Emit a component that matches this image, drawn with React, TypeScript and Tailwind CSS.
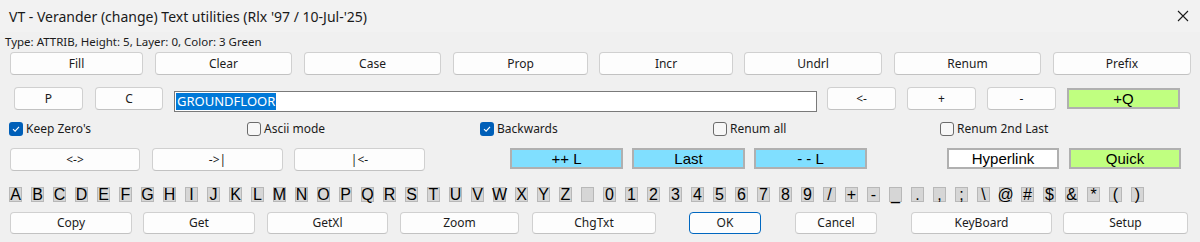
import React from "react";

const F = { fontFamily: '"Noto Sans", "Open Sans", sans-serif' } as const;
const A = { fontFamily: '"Liberation Sans", Arial, sans-serif' } as const;

function Btn({ label, w, h = "h-[23px]", cls = "" }: { label: string; w: string; h?: string; cls?: string }) {
  return (
    <div
      className={`${w} ${h} ${cls} shrink-0 flex items-center justify-center rounded-[4px] border border-[#d0d0d0] border-b-[#c2c2c2] bg-[#fdfdfd] text-[12px] text-[#1b1b1b]`}
      style={F}
    >
      {label}
    </div>
  );
}

function CBtn({ label, w, bg }: { label: string; w: string; bg: string }) {
  return (
    <div
      className={`${w} ${bg} h-[21px] shrink-0 flex items-center justify-center border-2 border-[#b0b0b0] text-[15px] leading-none text-black`}
      style={A}
    >
      {label}
    </div>
  );
}

function Check({ label, checked, w }: { label: string; checked: boolean; w: string }) {
  return (
    <div className={`${w} shrink-0 flex items-center gap-[3px]`}>
      {checked ? (
        <div className="w-[14px] h-[14px] rounded-[3px] bg-[#005fb8] flex items-center justify-center">
          <svg width="10" height="10" viewBox="0 0 10 10">
            <path d="M2 5.2 L4.1 7.2 L8 2.8" fill="none" stroke="white" strokeWidth="1.1" />
          </svg>
        </div>
      ) : (
        <div className="w-[14px] h-[14px] rounded-[3px] border border-[#6b6b6b] bg-[#f7f7f7]" />
      )}
      <span className="text-[12px] text-[#1b1b1b]" style={F}>
        {label}
      </span>
    </div>
  );
}

const chars = [
  ..."ABCDEFGHIJKLMNOPQRSTUVWXYZ".split(""),
  "",
  ..."0123456789".split(""),
  "/", "+", "-", "_", ".", ",", ";", "\\", "@", "#", "$", "&", "*", "(", ")",
];

export default function App() {
  return (
    <div className="w-[1200px] h-[242px] bg-[#f0f0f0] overflow-hidden flex flex-col">
      {/* Title bar */}
      <div className="h-[32px] shrink-0 flex items-center justify-between pl-[9px] pr-[11px] bg-[#f2f2f2]">
        <span className="text-[14px] text-[#1a1a1a]" style={F}>
          VT - Verander (change) Text utilities (Rlx '97 / 10-Jul-'25)
        </span>
        <svg width="12" height="12" viewBox="0 0 12 12">
          <path d="M1 1 L11 11 M11 1 L1 11" stroke="#1a1a1a" strokeWidth="1.1" />
        </svg>
      </div>
      {/* info */}
      <div className="h-[16px] mt-[2px] pl-[5px] flex items-center text-[11.5px] text-[#1b1b1b]" style={F}>
        Type: ATTRIB, Height: 5, Layer: 0, Color: 3 Green
      </div>
      {/* Row 1 */}
      <div className="mt-[2px] pl-[10px] flex">
        <Btn label="Fill" w="w-[133px]" />
        <Btn label="Clear" w="w-[137px]" cls="ml-[12px]" />
        <Btn label="Case" w="w-[137px]" cls="ml-[12px]" />
        <Btn label="Prop" w="w-[135px]" cls="ml-[12px]" />
        <Btn label="Incr" w="w-[134px]" cls="ml-[11px]" />
        <Btn label="Undrl" w="w-[138px]" cls="ml-[11px]" />
        <Btn label="Renum" w="w-[147px]" cls="ml-[12px]" />
        <Btn label="Prefix" w="w-[138px]" cls="ml-[12px]" />
      </div>
      {/* Row 2 */}
      <div className="mt-[12px] pl-[14px] flex items-start h-[25px]">
        <Btn label="P" w="w-[69px]" />
        <Btn label="C" w="w-[68px]" cls="ml-[12px]" />
        <div className="ml-[11px] mt-[4px] w-[643px] h-[21px] shrink-0 bg-white border border-[#7a7a7a] flex items-center pl-[1px]">
          <span className="bg-[#0078d7] text-white text-[13px] leading-[17px] px-[1px]" style={F}>
            GROUNDFLOOR
          </span>
        </div>
        <Btn label="<-" w="w-[69px]" cls="ml-[10px]" />
        <Btn label="+" w="w-[69px]" cls="ml-[11px]" />
        <Btn label="-" w="w-[69px]" cls="ml-[11px]" />
        <div className="ml-[11px] mt-[1px]">
          <CBtn label="+Q" w="w-[113px]" bg="bg-[#c0ff80]" />
        </div>
      </div>
      {/* Checkboxes */}
      <div className="mt-[10px] pl-[9px] flex h-[14px]">
        <Check label="Keep Zero's" checked w="w-[238px]" />
        <Check label="Ascii mode" checked={false} w="w-[233px]" />
        <Check label="Backwards" checked w="w-[233px]" />
        <Check label="Renum all" checked={false} w="w-[227px]" />
        <Check label="Renum 2nd Last" checked={false} w="w-[200px]" />
      </div>
      {/* Row 4 */}
      <div className="mt-[12px] pl-[10px] flex items-start h-[23px]">
        <Btn label="<->" w="w-[130px]" />
        <Btn label="->|" w="w-[131px]" cls="ml-[12px]" />
        <Btn label="|<-" w="w-[131px]" cls="ml-[11px]" />
        <div className="ml-[85px]">
          <CBtn label="++ L" w="w-[113px]" bg="bg-[#80dfff]" />
        </div>
        <div className="ml-[9px]">
          <CBtn label="Last" w="w-[113px]" bg="bg-[#80dfff]" />
        </div>
        <div className="ml-[9px]">
          <CBtn label="- - L" w="w-[113px]" bg="bg-[#80dfff]" />
        </div>
        <div className="ml-[80px]">
          <CBtn label="Hyperlink" w="w-[112px]" bg="bg-white" />
        </div>
        <div className="ml-[10px]">
          <CBtn label="Quick" w="w-[112px]" bg="bg-[#c0ff80]" />
        </div>
      </div>
      {/* Char row */}
      <div className="mt-[16px] pl-[9px] flex gap-[9px] h-[15px]">
        {chars.map((c, i) => (
          <div
            key={i}
            className="w-[13px] h-[15px] shrink-0 bg-[#d6d6d6] border border-[#b8b8b8] flex items-center justify-center text-[16px] leading-none text-black"
            style={A}
          >
            {c}
          </div>
        ))}
      </div>
      {/* Bottom row */}
      <div className="mt-[10px] pl-[10px] flex">
        <Btn label="Copy" w="w-[122px]" h="h-[22px]" />
        <Btn label="Get" w="w-[112px]" h="h-[22px]" cls="ml-[11px]" />
        <Btn label="GetXl" w="w-[121px]" h="h-[22px]" cls="ml-[12px]" />
        <Btn label="Zoom" w="w-[119px]" h="h-[22px]" cls="ml-[12px]" />
        <Btn label="ChgTxt" w="w-[124px]" h="h-[22px]" cls="ml-[13px]" />
        <div
          className="ml-[33px] w-[72px] h-[22px] shrink-0 flex items-center justify-center rounded-[4px] border border-[#0067c0] bg-[#fdfdfd] text-[12px] text-[#1b1b1b]"
          style={F}
        >
          OK
        </div>
        <Btn label="Cancel" w="w-[82px]" h="h-[22px]" cls="ml-[34px]" />
        <Btn label="KeyBoard" w="w-[141px]" h="h-[22px]" cls="ml-[34px]" />
        <Btn label="Setup" w="w-[125px]" h="h-[22px]" cls="ml-[11px]" />
      </div>
    </div>
  );
}
